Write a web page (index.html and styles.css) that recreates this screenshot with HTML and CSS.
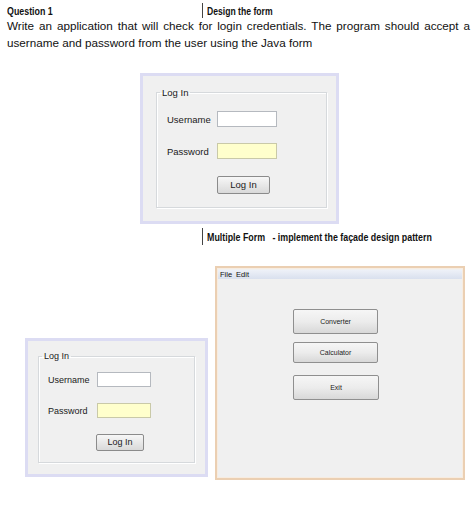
FILE: index.html
```html
<!DOCTYPE html>
<html>
<head>
<meta charset="utf-8">
<link rel="stylesheet" href="styles.css">
</head>
<body>
<div class="doc">
  <div class="head">
    <span class="q"><span class="narrow">Question 1</span></span>
    <span class="topic"><span class="narrow">Design the form</span></span>
  </div>
  <p class="para">Write an application that will check for login credentials. The program should accept a username and password from the user using the Java form</p>

  <div class="win win-a">
    <fieldset class="grp">
      <legend>Log In</legend>
      <div class="row"><span class="lbl">Username</span><span class="field"></span></div>
      <div class="row"><span class="lbl">Password</span><span class="field field-pw"></span></div>
      <div class="row"><span class="lbl"></span><span class="btn">Log In</span></div>
    </fieldset>
  </div>

  <div class="head head2">
    <span class="q"></span>
    <span class="topic"><span class="narrow">Multiple Form &nbsp; - implement the façade design pattern</span></span>
  </div>

  <div class="bottom">
    <div class="win win-b">
      <fieldset class="grp">
        <legend>Log In</legend>
        <div class="row"><span class="lbl">Username</span><span class="field"></span></div>
        <div class="row"><span class="lbl">Password</span><span class="field field-pw"></span></div>
        <div class="row"><span class="lbl"></span><span class="btn">Log In</span></div>
      </fieldset>
    </div>

    <div class="frame">
      <div class="menubar"><span>File</span><span>Edit</span></div>
      <div class="menu-body">
        <span class="fbtn fbtn-tall">Converter</span>
        <span class="fbtn">Calculator</span>
        <span class="fbtn fbtn-tall fbtn-exit">Exit</span>
      </div>
    </div>
  </div>
</div>
</body>
</html>
```

FILE: styles.css
```css
html, body {
  margin: 0;
  background: #ffffff;
}

.doc {
  padding: 3px 4px 0 7px;
  font-family: "Liberation Sans", Arial, sans-serif;
  color: #111;
}

.head {
  display: flex;
  align-items: stretch;
  height: 15px;
  white-space: nowrap;
  overflow: hidden;
}

.q {
  flex: none;
  width: 195px;
  font-weight: bold;
  font-size: 11.5px;
  line-height: 17px;
}

.topic {
  flex: 1 1 auto;
  min-width: 0;
  overflow: hidden;
  border-left: 1px solid #444;
  padding-left: 4px;
  font-weight: bold;
  font-size: 11.2px;
  line-height: 17px;
}

.narrow {
  display: inline-block;
  transform: scaleX(0.77);
  transform-origin: 0 50%;
}

.para {
  margin: 0;
  font-size: 11.7px;
  line-height: 16.5px;
  text-align: justify;
  text-align-last: left;
  color: #111;
}

/* ---------- login windows ---------- */
.win {
  box-sizing: border-box;
  background: #f0f0f0;
  border: 3px solid #dcdcf3;
  font-family: "Liberation Sans", Arial, sans-serif;
  color: #1a1a1a;
}

.grp {
  margin: 0;
  border: 1px solid #d6d9dc;
  box-shadow: inset 1px 1px 0 #ffffff, 1px 1px 0 #ffffff;
  box-sizing: border-box;
}

.grp legend {
  padding: 0 2px;
  margin-left: -7px;
}

.row {
  display: flex;
  align-items: center;
}

.lbl {
  flex: none;
}

.field {
  box-sizing: border-box;
  background: #ffffff;
  border: 1px solid #b5b9bf;
}

.field-pw {
  background: #ffffcc;
  border-color: #c9c9a8;
}

.btn {
  box-sizing: border-box;
  text-align: center;
  border: 1px solid #8b8b8b;
  border-radius: 2px;
  background: linear-gradient(#f7f7f7, #e8e8e8 50%, #d9d9d9);
  color: #1a1a1a;
}

.win-a {
  width: 199px;
  height: 151px;
  margin: 22px 0 0 133px;
  padding: 11px 9px 0 13px;
  font-size: 9.5px;
}
.win-a .grp { padding: 13px 9px 12px 10px; height: 121px; }
.win-a legend { line-height: 11px; }
.win-a .row { height: 16px; }
.win-a .row + .row { margin-top: 16px; }
.win-a .row:last-child { margin-top: 17px; height: 18px; }
.win-a .lbl { width: 50px; }
.win-a .field { width: 60px; height: 16px; }
.win-a .btn { width: 53px; height: 18px; line-height: 16px; }

.win-b {
  width: 183px;
  height: 139px;
  padding: 10px 10px 0 10px;
  font-size: 9px;
  margin-bottom: 3px;
}
.win-b .grp { padding: 11px 9px 11px 9px; height: 112px; }
.win-b legend { line-height: 10px; margin-left: -6px; }
.win-b .row { height: 15px; }
.win-b .row + .row { margin-top: 16px; }
.win-b .row:last-child { margin-top: 16px; height: 17px; }
.win-b .lbl { width: 49px; }
.win-b .field { width: 54px; height: 15px; }
.win-b .btn { width: 48px; height: 17px; line-height: 15px; margin-left: -1px; }

.head2 {
  margin-top: 4px;
  height: 17px;
}
.head2 .topic { line-height: 19px; font-size: 11.5px; }

/* ---------- bottom area ---------- */
.bottom {
  display: flex;
  align-items: flex-end;
  gap: 7px;
  margin: 21px 0 0 18px;
}

.frame {
  box-sizing: border-box;
  width: 250px;
  height: 214px;
  border: 2px solid #ebcfb2;
  box-shadow: inset 0 0 0 1px #f7ece0;
  background: #f0f0f0;
  padding: 2px 1px 1px 1px;
  font-family: "Liberation Sans", Arial, sans-serif;
}

.menubar {
  height: 9px;
  display: flex;
  gap: 4px;
  padding-left: 2px;
  background: linear-gradient(#eef1f8, #d9e0ee);
  font-size: 7.5px;
  line-height: 9px;
  color: #111;
}

.menu-body {
  display: flex;
  flex-direction: column;
  align-items: flex-start;
  padding: 30px 0 0 75px;
}

.fbtn {
  box-sizing: border-box;
  width: 85px;
  height: 21px;
  border: 1px solid #8f8f8f;
  border-radius: 2px;
  background: linear-gradient(#f6f6f6, #ececec 50%, #d8d8d8);
  font-size: 7px;
  line-height: 19px;
  text-align: center;
  color: #222;
}

.fbtn-tall {
  height: 25px;
  line-height: 23px;
}

.fbtn + .fbtn { margin-top: 8px; }
.fbtn-exit { margin-top: 12px !important; width: 86px; }
```
